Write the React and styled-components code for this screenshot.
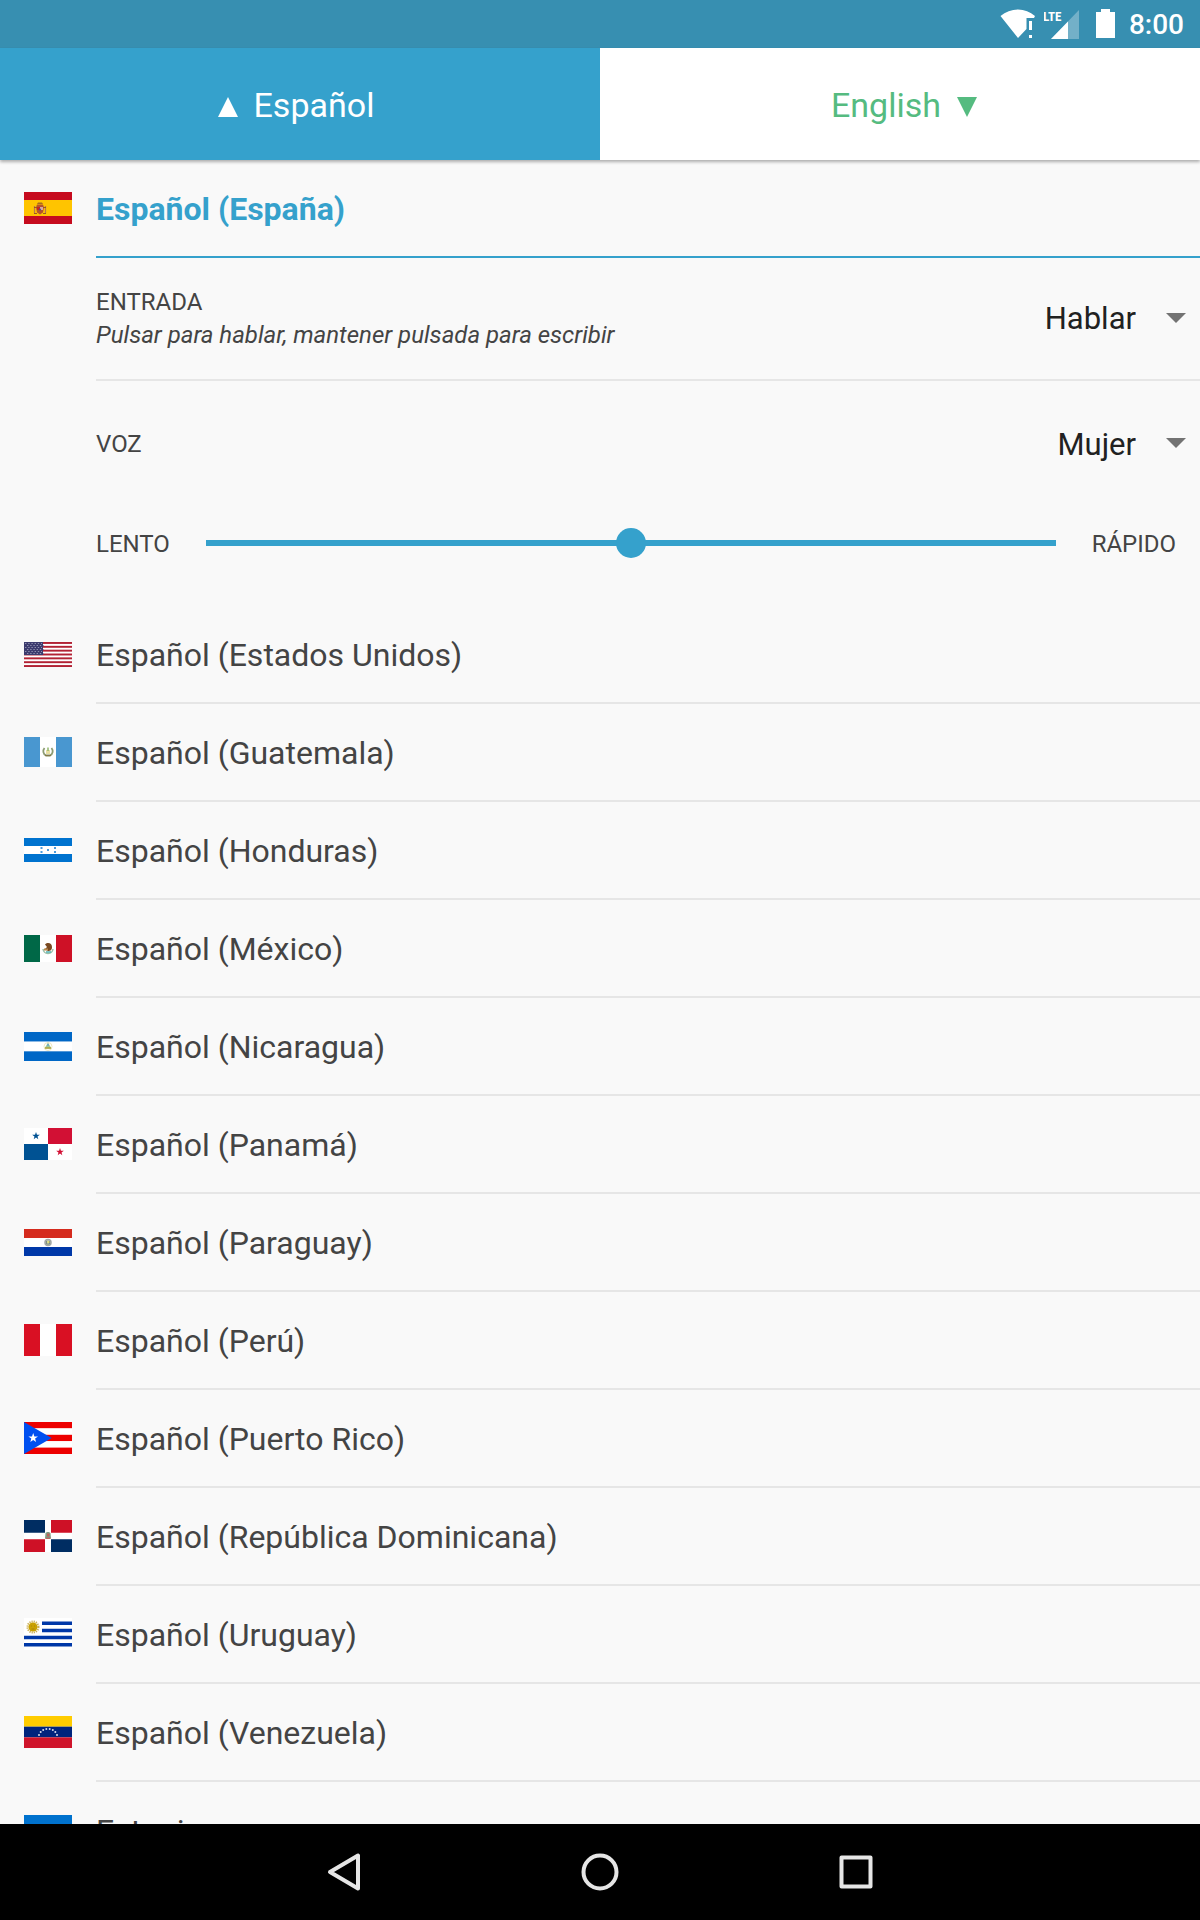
import React, { useState } from "react";

import styled, { createGlobalStyle } from "styled-components";

const BLUE = "#35a1cc";
const GREEN = "#55bb80";

const GlobalStyle = createGlobalStyle`
  * {
    box-sizing: border-box;
  }

  body {
    margin: 0;
    background-color: #f9f9f9;
    color: #444444;
    font-family: Roboto, "Noto Sans", sans-serif;
  }

  button,
  select,
  input {
    margin: 0;
    padding: 0;
    border: none;
    background: none;
    color: inherit;
    font: inherit;
  }

  svg {
    display: block;
    flex-shrink: 0;
  }
`;

const Screen = styled.div`
  display: flex;
  flex-direction: column;
  height: 100vh;
`;

const StatusBar = styled.div`
  display: flex;
  justify-content: flex-end;
  align-items: center;
  gap: 8px;
  height: 48px;
  flex-shrink: 0;
  padding-right: 16px;
  background-color: #378fb1;
  color: #ffffff;
`;

const Clock = styled.time`
  padding-top: 2px;
  font-size: 28px;
  font-weight: 500;
  line-height: 46px;
`;

const Tabs = styled.nav`
  display: flex;
  flex-shrink: 0;
  height: 112px;
  box-shadow: 0 2px 3px rgba(0, 0, 0, 0.3);
  z-index: 1;
`;

const Tab = styled.button`
  display: flex;
  flex: 1;
  justify-content: center;
  align-items: center;
  gap: 8px;
  padding-top: 2px;
  background-color: ${(props) => (props.$active ? BLUE : "#ffffff")};
  color: ${(props) => (props.$active ? "#ffffff" : GREEN)};
  font-size: 34px;

  > svg {
    margin-top: 4px;
  }
`;

const TabLabel = styled.span`
  padding: 0 8px;
`;

const Content = styled.main`
  flex: 1;
  min-height: 0;
  overflow-y: auto;
  scrollbar-width: none;
`;

const List = styled.ul`
  margin: 0;
  padding: 0;
  list-style: none;
`;

const Row = styled.button`
  display: flex;
  align-items: flex-start;
  width: 100%;
  padding-left: 24px;
  text-align: left;
`;

const FlagCell = styled.span`
  display: flex;
  align-items: center;
  width: 72px;
  height: 96px;
  flex-shrink: 0;
`;

const RowText = styled.span`
  flex: 1;
  height: 98px;
  padding-top: 2px;
  border-bottom: 2px solid ${(props) => (props.$active ? BLUE : "#e6e6e6")};
  color: ${(props) => (props.$active ? BLUE : "inherit")};
  font-size: 32px;
  font-weight: ${(props) => (props.$active ? 700 : 400)};
  line-height: 94px;
`;

const Settings = styled.section`
  display: flex;
  flex-direction: column;
  padding: 0 0 27px 96px;
  font-size: 24px;
  line-height: 33px;
`;

const Setting = styled.div`
  display: flex;
  justify-content: space-between;
  align-items: center;
  height: ${(props) => (props.$divided ? "123px" : "126px")};
  border-bottom: ${(props) => (props.$divided ? "2px solid #e6e6e6" : "none")};
`;

const SettingLabel = styled.label`
  display: flex;
  flex-direction: column;
`;

const Hint = styled.em`
  font-style: italic;
`;

const SelectWrapp = styled.div`
  display: grid;
  align-items: center;

  > * {
    grid-area: 1 / 1;
  }

  > svg {
    justify-self: end;
    margin: 0 14px 2px 0;
    pointer-events: none;
  }
`;

const SelectBox = styled.select`
  appearance: none;
  field-sizing: content;
  height: 64px;
  padding-right: 64px;
  color: #212121;
  font-size: 31px;
  text-align-last: right;
`;

const SpeedRow = styled.div`
  display: flex;
  align-items: center;
  gap: 36px;
  height: 72px;
  padding-right: 24px;
`;

const SpeedLabel = styled.label`
  padding-top: 2px;
`;

const Slider = styled.input`
  appearance: none;
  flex: 1;
  min-width: 0;
  height: 30px;

  &::-webkit-slider-runnable-track {
    height: 6px;
    background-color: ${BLUE};
  }

  &::-webkit-slider-thumb {
    appearance: none;
    width: 30px;
    height: 30px;
    margin-top: -12px;
    border-radius: 50%;
    background-color: ${BLUE};
  }
`;

const NavBar = styled.footer`
  display: flex;
  justify-content: center;
  flex-shrink: 0;
  height: 96px;
  background-color: #000000;
`;

const NavButton = styled.button`
  display: flex;
  justify-content: center;
  align-items: center;
  width: 256px;
`;

const STAR = "M0-5 1.2-1.6 4.8-1.5 1.9.6 2.9 4 0 2-2.9 4-1.9.6-4.8-1.5-1.2-1.6z";

const Flag = ({ height, children }) => (
  <svg width="48" height={height} viewBox={`0 0 48 ${height}`} aria-hidden="true">
    {children}
  </svg>
);

const Bands = ({ colors, height }) =>
  colors.map((color, i) => (
    <rect
      key={i}
      y={(height / colors.length) * i}
      width="48"
      height={height / colors.length}
      fill={color}
    />
  ));

const Pales = ({ colors, height }) =>
  colors.map((color, i) => (
    <rect key={i} x={i * 16} width="16" height={height} fill={color} />
  ));

const Spain = () => (
  <Flag height={32}>
    <rect width="48" height="32" fill="#c60b1e" />
    <rect y="8" width="48" height="16" fill="#ffc400" />
    <path d="M13 12.5h6l1 3-1 5-3 2-3-2-1-5z" fill="#b5532b" />
    <path d="M13 12h6l-1-1.5h-4z" fill="#a86a20" />
    <path d="M13 15h3v3h-3z" fill="#c8251f" />
    <path d="M16 15h3v3h-3z" fill="#d9a9a0" />
    <circle cx="16" cy="17.5" r="1" fill="#3c4f9b" />
    <path d="M10.5 14v7M21.5 14v7" stroke="#b77a4a" strokeWidth="1.2" />
    <path d="M10 21.5h3M19 21.5h3M10 15.5h3M19 15.5h3" stroke="#9c5428" />
  </Flag>
);

const UnitedStates = () => (
  <Flag height={25}>
    <rect width="48" height="25" fill="#ffffff" />
    {[0, 1, 2, 3, 4, 5, 6].map((i) => (
      <rect key={i} y={(i * 50) / 13} width="48" height={25 / 13} fill="#b22234" />
    ))}
    <rect width="19" height="13" fill="#3c3b6e" />
    {[1, 3, 5, 7, 9, 11].map((y) => (
      <path
        key={y}
        d={`M${y % 4 === 1 ? 1 : 3} ${y + 0.5}h17`}
        stroke="#8f8fae"
        strokeDasharray="1.4 1.8"
      />
    ))}
  </Flag>
);

const Guatemala = () => (
  <Flag height={30}>
    <Pales colors={["#4997d0", "#ffffff", "#4997d0"]} height={30} />
    <path
      d="M20.5 11c-2 2.500-1.500 6 1.500 7.500h4c3-1.500 3.500-5 1.500-7.500"
      fill="none"
      stroke="#8d9c72"
      strokeWidth="1.8"
    />
    <path d="M22 13h4v4h-4z" fill="#e8dfa0" />
    <path d="M24 10.500v3.500" stroke="#8fb66a" strokeWidth="1.5" />
    <path d="M21 18.500h6" stroke="#857848" strokeWidth="1.2" />
  </Flag>
);

const Honduras = () => (
  <Flag height={24}>
    <Bands colors={["#0073cf", "#ffffff", "#0073cf"]} height={24} />
    {[
      [16.5, 9],
      [16.5, 13],
      [23, 11],
      [30, 9],
      [30, 13],
    ].map(([x, y]) => (
      <rect key={`${x}-${y}`} x={x} y={y} width="2" height="2" fill="#4c9cdc" />
    ))}
  </Flag>
);

const Mexico = () => (
  <Flag height={27}>
    <Pales colors={["#006847", "#ffffff", "#ce1126"]} height={27} />
    <path d="M19 14c1 6 9 6 10 0" fill="none" stroke="#9dbfa8" strokeWidth="1.5" />
    <path d="M21 9.5c3-3 7-1 7 2.5s-2 4-4 4l-3-2 2-2z" fill="#7a4a22" />
    <path d="M20 13.5h4v2h-4z" fill="#b9894d" />
    <path d="M22 17h5" stroke="#4fb0b0" strokeWidth="1.5" />
  </Flag>
);

const Nicaragua = () => (
  <Flag height={29}>
    <Bands colors={["#0067c6", "#ffffff", "#0067c6"]} height={29} />
    <circle cx="24" cy="14.5" r="4" fill="none" stroke="#efe7c0" />
    <path d="M24 10.5 27.5 16.5h-7z" fill="#9cc79a" />
    <path d="M21 16h6" stroke="#b3a53e" strokeWidth="1.5" />
    <path d="M24 12v2" stroke="#6aa6c8" strokeWidth="1.5" />
  </Flag>
);

const Panama = () => (
  <Flag height={32}>
    <rect width="48" height="32" fill="#ffffff" />
    <rect x="24" width="24" height="16" fill="#d21034" />
    <rect y="16" width="24" height="16" fill="#005293" />
    <path d={STAR} transform="translate(12 8) scale(0.8)" fill="#005293" />
    <path d={STAR} transform="translate(36 24) scale(0.8)" fill="#d21034" />
  </Flag>
);

const Paraguay = () => (
  <Flag height={27}>
    <Bands colors={["#d52b1e", "#ffffff", "#0038a8"]} height={27} />
    <circle cx="24" cy="13.5" r="3" fill="#c9d2ae" stroke="#a3a8a6" strokeWidth="1.5" />
    <path d="M22.5 12v3h3v-3" fill="none" stroke="#7f9080" />
    <circle cx="24.5" cy="13" r="1" fill="#e8df6a" />
  </Flag>
);

const Peru = () => (
  <Flag height={32}>
    <Pales colors={["#d91023", "#ffffff", "#d91023"]} height={32} />
  </Flag>
);

const PuertoRico = () => (
  <Flag height={32}>
    <Bands colors={["#ed0000", "#ffffff", "#ed0000", "#ffffff", "#ed0000"]} height={32} />
    <path d="M0 0 27.7 16 0 32z" fill="#0050f0" />
    <path d={STAR} transform="translate(9.2 16)" fill="#ffffff" />
  </Flag>
);

const DominicanRepublic = () => (
  <Flag height={32}>
    <rect width="48" height="32" fill="#ffffff" />
    <path d="M0 0h21v12.7H0zM27 19.3h21V32H27z" fill="#002d62" />
    <path d="M27 0h21v12.7H27zM0 19.3h21V32H0z" fill="#ce1126" />
    <path d="M21.5 13c1-1.5 4-1.5 5 0l.5 5.5h-6z" fill="#7f9d83" />
    <path d="M23 13.5h2.5v3H23z" fill="#c0605c" />
    <path d="M21.5 18.3h5" stroke="#c24d4d" />
  </Flag>
);

const Uruguay = () => (
  <Flag height={32}>
    <rect width="48" height="32" fill="#ffffff" />
    <path
      d="M18 3.6h30v3.5H18zM18 10.7h30v3.5H18zM0 17.8h48v3.5H0zM0 24.9h48v3.5H0z"
      fill="#0038a8"
    />
    <circle
      cx="9"
      cy="9"
      r="5.5"
      fill="none"
      stroke="#c9ae55"
      strokeWidth="2"
      strokeDasharray="1.2 0.96"
    />
    <circle cx="9" cy="9" r="4.5" fill="#c9a100" />
    <path d="M7 8h1M10 8h1M7.5 11h3" stroke="#a37f10" strokeWidth="0.8" />
  </Flag>
);

const Venezuela = () => (
  <Flag height={32}>
    <Bands colors={["#ffcc00", "#00247d", "#cf142b"]} height={32} />
    {[
      [15, 19],
      [16.7, 16],
      [19.2, 14],
      [22.3, 12.9],
      [25.7, 12.9],
      [28.8, 14],
      [31.3, 16],
      [33, 19],
    ].map(([x, y]) => (
      <circle key={x} cx={x} cy={y} r="1" fill="#d5daea" />
    ))}
  </Flag>
);

const Estonia = () => (
  <Flag height={30}>
    <Bands colors={["#0072ce", "#000000", "#ffffff"]} height={30} />
  </Flag>
);

const LANGUAGES = [
  { name: "Español (Estados Unidos)", FlagIcon: UnitedStates },
  { name: "Español (Guatemala)", FlagIcon: Guatemala },
  { name: "Español (Honduras)", FlagIcon: Honduras },
  { name: "Español (México)", FlagIcon: Mexico },
  { name: "Español (Nicaragua)", FlagIcon: Nicaragua },
  { name: "Español (Panamá)", FlagIcon: Panama },
  { name: "Español (Paraguay)", FlagIcon: Paraguay },
  { name: "Español (Perú)", FlagIcon: Peru },
  { name: "Español (Puerto Rico)", FlagIcon: PuertoRico },
  { name: "Español (República Dominicana)", FlagIcon: DominicanRepublic },
  { name: "Español (Uruguay)", FlagIcon: Uruguay },
  { name: "Español (Venezuela)", FlagIcon: Venezuela },
  { name: "Estonio", FlagIcon: Estonia },
];

const WifiIcon = () => (
  <svg width="36" height="32" viewBox="0 0 36 32" fill="#ffffff" aria-hidden="true">
    <path d="M.5 8C5.5 3.800 11.5 1.500 18 1.500S30 3.800 35 8l-1 2h-7.500v11L18 30z" />
    <path d="M29 13h3v9h-3zM29 27h3v3h-3z" />
  </svg>
);

const SignalText = styled.text`
  font-size: 13px;
  font-weight: 700;
  font-family: "Roboto Condensed", Roboto, sans-serif;
`;

const SignalIcon = () => (
  <svg width="36" height="32" viewBox="0 0 36 32" fill="#ffffff" aria-hidden="true">
    <path d="M35 2v29H7z" opacity="0.3" />
    <path d="M24 13.5V31H7z" />
    <SignalText x="-1" y="13">
      LTE
    </SignalText>
  </svg>
);

const BatteryIcon = () => (
  <svg width="33" height="32" viewBox="0 0 33 32" fill="#ffffff" aria-hidden="true">
    <path d="M13 1h9v3h5v26H8V4h5z" />
  </svg>
);

const Triangle = ({ down }) => (
  <svg width="20" height="20" viewBox="0 0 20 20" fill="currentColor" aria-hidden="true">
    <path d={down ? "M0 0h20L10 20z" : "M10 0 20 20H0z"} />
  </svg>
);

const LanguageRow = ({ name, FlagIcon, active }) => (
  <li>
    <Row type="button">
      <FlagCell>
        <FlagIcon />
      </FlagCell>
      <RowText $active={active}>{name}</RowText>
    </Row>
  </li>
);

const Select = ({ id, options }) => (
  <SelectWrapp>
    <SelectBox id={id}>
      {options.map((option) => (
        <option key={option}>{option}</option>
      ))}
    </SelectBox>
    <svg width="20" height="10" viewBox="0 0 20 10" fill="#737373" aria-hidden="true">
      <path d="M0 0h20L10 10z" />
    </svg>
  </SelectWrapp>
);

const App = () => {
  const [speed, setSpeed] = useState(50);

  return (
    <Screen>
      <GlobalStyle />
      <StatusBar>
        <WifiIcon />
        <SignalIcon />
        <BatteryIcon />
        <Clock>8:00</Clock>
      </StatusBar>
      <Tabs>
        <Tab type="button" $active>
          <Triangle />
          <TabLabel>Español</TabLabel>
        </Tab>
        <Tab type="button">
          <TabLabel>English</TabLabel>
          <Triangle down />
        </Tab>
      </Tabs>
      <Content>
        <List>
          <LanguageRow name="Español (España)" FlagIcon={Spain} active />
        </List>
        <Settings>
          <Setting $divided>
            <SettingLabel htmlFor="input-mode">
              <span>ENTRADA</span>
              <Hint>Pulsar para hablar, mantener pulsada para escribir</Hint>
            </SettingLabel>
            <Select id="input-mode" options={["Hablar", "Escribir"]} />
          </Setting>
          <Setting>
            <SettingLabel htmlFor="voice">VOZ</SettingLabel>
            <Select id="voice" options={["Mujer", "Hombre"]} />
          </Setting>
          <SpeedRow>
            <SpeedLabel htmlFor="speed">LENTO</SpeedLabel>
            <Slider
              id="speed"
              type="range"
              value={speed}
              onChange={(e) => setSpeed(Number(e.target.value))}
            />
            <SpeedLabel htmlFor="speed">RÁPIDO</SpeedLabel>
          </SpeedRow>
        </Settings>
        <List>
          {LANGUAGES.map((language) => (
            <LanguageRow key={language.name} {...language} />
          ))}
        </List>
      </Content>
      <NavBar>
        <NavButton type="button" aria-label="Atrás">
          <svg
            width="40"
            height="40"
            viewBox="0 0 40 40"
            fill="none"
            stroke="#e6e6e6"
            strokeWidth="4"
            strokeLinejoin="round"
          >
            <path d="M34 3.5v33L6 20z" />
          </svg>
        </NavButton>
        <NavButton type="button" aria-label="Inicio">
          <svg
            width="40"
            height="40"
            viewBox="0 0 40 40"
            fill="none"
            stroke="#e6e6e6"
            strokeWidth="4"
          >
            <circle cx="20" cy="20" r="16.5" />
          </svg>
        </NavButton>
        <NavButton type="button" aria-label="Recientes">
          <svg
            width="40"
            height="40"
            viewBox="0 0 40 40"
            fill="none"
            stroke="#e6e6e6"
            strokeWidth="4"
            strokeLinejoin="round"
          >
            <rect x="5.5" y="5.5" width="29" height="29" />
          </svg>
        </NavButton>
      </NavBar>
    </Screen>
  );
};

export default App;
